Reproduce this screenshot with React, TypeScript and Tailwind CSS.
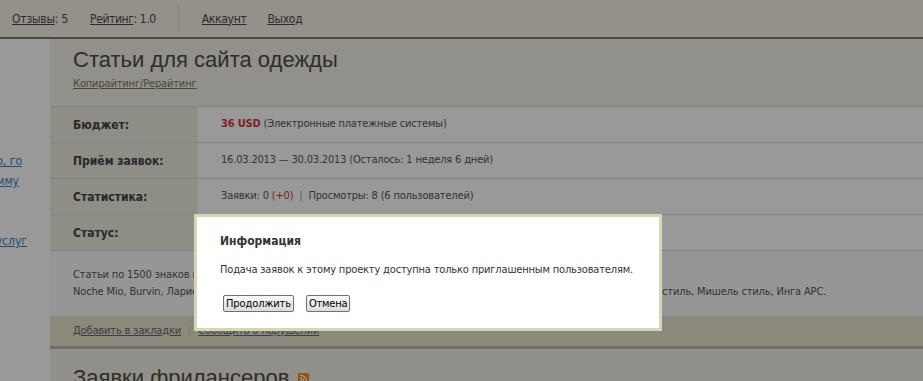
import React from "react";

const F = "font-['DejaVu_Sans_Condensed','DejaVu_Sans',sans-serif]";

function Row({ label, children }: { label: string; children?: React.ReactNode }) {
  return (
    <div className="flex h-[36px] shrink-0 border-t border-[#dcdbd2]">
      <div className="w-[147px] shrink-0 bg-[#edebdf] pl-[23px] flex items-center text-[12px] font-bold text-[#444]">
        {label}
      </div>
      <div className="flex-1 bg-white pl-[23px] flex items-center text-[11px] tracking-[-0.18px] text-[#555] border-l border-[#edebdf]">
        {children}
      </div>
    </div>
  );
}

export default function App() {
  return (
    <div className={`relative w-[923px] h-[381px] overflow-hidden bg-white ${F}`}>
      {/* top bar */}
      <div className="h-[39px] bg-[#f5f2e4] border-b-2 border-[#7d7b67] flex items-center text-[12px] text-[#4a4a4a]">
        <div className="pl-[12px] flex items-center tracking-[-0.2px]">
          <span className="underline">Отзывы</span>
          <span>: 5</span>
        </div>
        <div className="pl-[22px] flex items-center tracking-[-0.4px]">
          <span className="underline">Рейтинг</span>
          <span>: 1.0</span>
        </div>
        <div className="ml-[22px] h-[27px] border-l border-dotted border-[#c8c6bb]" />
        <span className="ml-[23px] underline tracking-[-0.3px]">Аккаунт</span>
        <span className="ml-[21px] underline tracking-[-0.3px]">Выход</span>
      </div>

      <div className="flex h-[342px] overflow-hidden">
        {/* sidebar */}
        <div className="w-[50px] shrink-0 bg-white overflow-hidden text-[12px] text-[#3f7fc4]">
          <div className="flex flex-col items-end pt-[112px]">
            <span className="pr-[28px] underline whitespace-nowrap leading-[20px]">о, го</span>
            <span className="pr-[31px] underline whitespace-nowrap leading-[20px]">мму</span>
            <span className="pr-[23px] underline whitespace-nowrap leading-[20px] mt-[40px]">услуг</span>
          </div>
        </div>

        {/* main */}
        <div className="flex-1 bg-[#f2f0e6] flex flex-col overflow-hidden">
          <div className="pl-[23px] pt-[8px] shrink-0">
            <div className="font-['Liberation_Sans',sans-serif] text-[22px] leading-[26px] text-[#4d4c42]">
              Статьи для сайта одежды
            </div>
            <div className="mt-[4px] text-[11px] leading-[14px] tracking-[-0.15px] text-[#7a7860] underline">
              Копирайтинг/Рерайтинг
            </div>
          </div>

          <div className="mt-[15px] shrink-0">
            <Row label="Бюджет:">
              <span className="font-bold text-[#d03a3a]">36 USD</span>
              <span>&nbsp;(Электронные платежные системы)</span>
            </Row>
            <Row label="Приём заявок:">16.03.2013 — 30.03.2013 (Осталось: 1 неделя 6 дней)</Row>
            <Row label="Статистика:">
              <span>Заявки: 0&nbsp;</span>
              <span className="text-[#c03535]">(+0)</span>
              <span className="text-[#999] px-[6px]">|</span>
              <span>Просмотры: 8 (6 пользователей)</span>
            </Row>
            <Row label="Статус:">Открыт для предложений</Row>
          </div>

          <div className="h-[66px] shrink-0 border-t border-[#dcdbd2] bg-[#fafafa] pl-[23px] pt-[15px] text-[11px] leading-[17px] tracking-[-0.15px] text-[#555] whitespace-nowrap">
            <div>Статьи по 1500 знаков про одежду и аксессуары, уникальность от 95%.</div>
            <div>Noche Mio, Burvin, Лариса, Анабель Арто, Victoria Veisbrut, Zarina, Oodji, Savage, Gloria Jeans, Tom Farr, Lee, Арт-Деко стиль, Мишель стиль, Инга АРС.</div>
          </div>

          <div className="h-[30px] shrink-0 bg-[#e6e4cf] pl-[23px] flex items-center text-[11px] tracking-[-0.15px] text-[#666]">
            <span className="underline">Добавить в закладки</span>
            <span className="px-[7px] text-[#c9c7b4]">|</span>
            <span className="underline">Сообщить о нарушении</span>
          </div>
          <div className="h-[3px] shrink-0 bg-[#b9b7af]" />

          <div className="flex-1 bg-[#f0eee4] pl-[23px] pt-[16px] flex items-start">
            <span className="font-['Liberation_Sans',sans-serif] text-[22px] leading-[26px] text-[#4d4c42] whitespace-nowrap">
              Заявки фрилансеров
            </span>
            <svg className="ml-[9px] mt-[8px] shrink-0" width="11" height="11" viewBox="0 0 11 11">
              <rect width="11" height="11" rx="1.5" fill="#f08a24" />
              <circle cx="3" cy="8" r="1.2" fill="#fff" />
              <path d="M2 5a4 4 0 0 1 4 4" stroke="#fff" strokeWidth="1.3" fill="none" />
              <path d="M2 2.2a6.8 6.8 0 0 1 6.8 6.8" stroke="#fff" strokeWidth="1.3" fill="none" />
            </svg>
          </div>
        </div>
      </div>

      {/* overlay */}
      <div className="absolute inset-0 bg-black/40" />

      {/* modal */}
      <div className="absolute left-[194px] top-[214px] w-[468px] h-[117px] border-[3px] border-[#d6d6b6] bg-white pl-[23px] pt-[16px]">
        <div className="text-[12px] leading-[16px] font-bold text-[#333]">Информация</div>
        <div className="mt-[14px] text-[11px] leading-[14px] tracking-[-0.17px] text-[#333]">
          Подача заявок к этому проекту доступна только приглашенным пользователям.
        </div>
        <div className="mt-[18px] ml-[3px] flex gap-[12px]">
          <button className="h-[17px] px-[2px] border border-[#707070] rounded-[2px] bg-[linear-gradient(#fafafa,#dcdcdc)] text-[11px] leading-[15px] tracking-[-0.1px] text-black">
            Продолжить
          </button>
          <button className="h-[17px] px-[2px] border border-[#707070] rounded-[2px] bg-[linear-gradient(#fafafa,#dcdcdc)] text-[11px] leading-[15px] tracking-[-0.2px] text-black">
            Отмена
          </button>
        </div>
      </div>
    </div>
  );
}
